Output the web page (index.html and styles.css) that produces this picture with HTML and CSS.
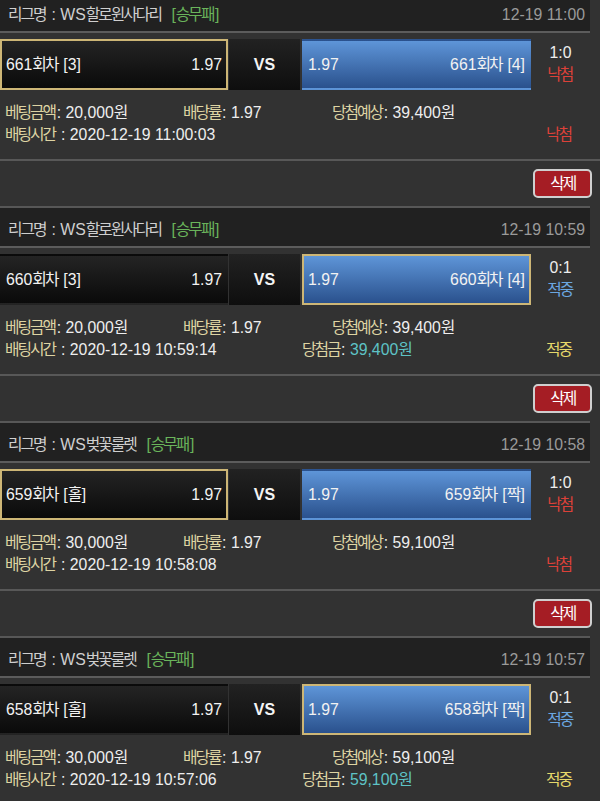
FILE: index.html
```html
<!DOCTYPE html>
<html lang="ko">
<head>
<meta charset="utf-8">
<title>배팅내역</title>
<link rel="stylesheet" href="styles.css">
</head>
<body>
<div class="list">

  <section class="bet">
    <div class="head">
      <span class="league"><span class="k">리그명</span> : WS<span class="k">할로윈사다리</span><span class="type">[<span class="k">승무패</span>]</span></span>
      <span class="date">12-19 11:00</span>
    </div>
    <div class="match">
      <div class="team home pick"><span>661<span class="k">회차</span> [3]</span><span>1.97</span></div>
      <div class="vs">VS</div>
      <div class="team away"><span>1.97</span><span>661<span class="k">회차</span> [4]</span></div>
      <div class="score"><span>1:0</span><span class="lose k">낙첨</span></div>
    </div>
    <div class="info">
      <div class="line">
        <span class="c1"><span class="lbl k">베팅금액</span>: 20,000<span class="k">원</span></span>
        <span class="c2"><span class="lbl k">배당률</span>: 1.97</span>
        <span class="c3"><span class="lbl k">당첨예상</span>: 39,400<span class="k">원</span></span>
      </div>
      <div class="line">
        <span class="c1w"><span class="lbl k">배팅시간</span> : 2020-12-19 11:00:03</span>
        <span class="c4"></span>
        <span class="res lose k">낙첨</span>
      </div>
    </div>
    <div class="actions"><button class="del k" type="button">삭제</button></div>
  </section>

  <section class="bet">
    <div class="head">
      <span class="league"><span class="k">리그명</span> : WS<span class="k">할로윈사다리</span><span class="type">[<span class="k">승무패</span>]</span></span>
      <span class="date">12-19 10:59</span>
    </div>
    <div class="match">
      <div class="team home"><span>660<span class="k">회차</span> [3]</span><span>1.97</span></div>
      <div class="vs">VS</div>
      <div class="team away pick"><span>1.97</span><span>660<span class="k">회차</span> [4]</span></div>
      <div class="score"><span>0:1</span><span class="hit k">적중</span></div>
    </div>
    <div class="info">
      <div class="line">
        <span class="c1"><span class="lbl k">베팅금액</span>: 20,000<span class="k">원</span></span>
        <span class="c2"><span class="lbl k">배당률</span>: 1.97</span>
        <span class="c3"><span class="lbl k">당첨예상</span>: 39,400<span class="k">원</span></span>
      </div>
      <div class="line">
        <span class="c1w"><span class="lbl k">배팅시간</span> : 2020-12-19 10:59:14</span>
        <span class="c4"><span class="lbl k">당첨금</span>: <span class="won">39,400<span class="k">원</span></span></span>
        <span class="res win k">적중</span>
      </div>
    </div>
    <div class="actions"><button class="del k" type="button">삭제</button></div>
  </section>

  <section class="bet">
    <div class="head">
      <span class="league"><span class="k">리그명</span> : WS<span class="k">벚꽃룰렛</span><span class="type">[<span class="k">승무패</span>]</span></span>
      <span class="date">12-19 10:58</span>
    </div>
    <div class="match">
      <div class="team home pick"><span>659<span class="k">회차</span> [<span class="k">홀</span>]</span><span>1.97</span></div>
      <div class="vs">VS</div>
      <div class="team away"><span>1.97</span><span>659<span class="k">회차</span> [<span class="k">짝</span>]</span></div>
      <div class="score"><span>1:0</span><span class="lose k">낙첨</span></div>
    </div>
    <div class="info">
      <div class="line">
        <span class="c1"><span class="lbl k">베팅금액</span>: 30,000<span class="k">원</span></span>
        <span class="c2"><span class="lbl k">배당률</span>: 1.97</span>
        <span class="c3"><span class="lbl k">당첨예상</span>: 59,100<span class="k">원</span></span>
      </div>
      <div class="line">
        <span class="c1w"><span class="lbl k">배팅시간</span> : 2020-12-19 10:58:08</span>
        <span class="c4"></span>
        <span class="res lose k">낙첨</span>
      </div>
    </div>
    <div class="actions"><button class="del k" type="button">삭제</button></div>
  </section>

  <section class="bet">
    <div class="head">
      <span class="league"><span class="k">리그명</span> : WS<span class="k">벚꽃룰렛</span><span class="type">[<span class="k">승무패</span>]</span></span>
      <span class="date">12-19 10:57</span>
    </div>
    <div class="match">
      <div class="team home"><span>658<span class="k">회차</span> [<span class="k">홀</span>]</span><span>1.97</span></div>
      <div class="vs">VS</div>
      <div class="team away pick"><span>1.97</span><span>658<span class="k">회차</span> [<span class="k">짝</span>]</span></div>
      <div class="score"><span>0:1</span><span class="hit k">적중</span></div>
    </div>
    <div class="info">
      <div class="line">
        <span class="c1"><span class="lbl k">베팅금액</span>: 30,000<span class="k">원</span></span>
        <span class="c2"><span class="lbl k">배당률</span>: 1.97</span>
        <span class="c3"><span class="lbl k">당첨예상</span>: 59,100<span class="k">원</span></span>
      </div>
      <div class="line">
        <span class="c1w"><span class="lbl k">배팅시간</span> : 2020-12-19 10:57:06</span>
        <span class="c4"><span class="lbl k">당첨금</span>: <span class="won">59,100<span class="k">원</span></span></span>
        <span class="res win k">적중</span>
      </div>
    </div>
    <div class="actions"><button class="del k" type="button">삭제</button></div>
  </section>

</div>
</body>
</html>
```

FILE: styles.css
```css
* {
  box-sizing: border-box;
  margin: 0;
  padding: 0;
}

body {
  background: #323232;
  font-family: "Liberation Sans", "Noto Sans CJK KR", sans-serif;
  font-size: 15.8px;
  color: #eeeeee;
  overflow: hidden;
}

.list {
  margin-top: -9px;
}

.k {
  letter-spacing: -2px;
  padding-right: 1.5px;
}

.head {
  width: 590px;
  height: 42px;
  background: #212121;
  border-top: 2px solid #575757;
  border-bottom: 2px solid #5c5c5c;
  display: flex;
  justify-content: space-between;
  align-items: center;
  padding: 5px 5px 0 8px;
  line-height: 33px;
  color: #cfcfcf;
}

.type {
  color: #6ab45b;
  margin-left: 9px;
}

.date {
  color: #9a9a9a;
}

.match {
  display: flex;
  height: 57px;
  padding-top: 6px;
}

.team {
  height: 51px;
  display: flex;
  justify-content: space-between;
  align-items: center;
  padding: 0 4px;
  border: 2px solid transparent;
  line-height: 20px;
  color: #f2f2f2;
}

.home {
  width: 228px;
  background: linear-gradient(#242424, #0a0a0a);
}

.vs {
  width: 71px;
  height: 51px;
  margin-left: 1px;
  background: linear-gradient(#222222, #0e0e0e);
  display: flex;
  align-items: center;
  justify-content: center;
  font-weight: bold;
  font-size: 16px;
  color: #f4f4f4;
}

.away {
  width: 229px;
  margin-left: 2px;
  background: linear-gradient(#5e95d8, #2a518d);
}

.pick {
  border-color: #cdb676;
}

.score {
  width: 59px;
  height: 51px;
  display: flex;
  flex-direction: column;
  align-items: center;
  justify-content: center;
  line-height: 22px;
  padding-bottom: 2px;
}

.lose {
  color: #dc4139;
}

.hit {
  color: #6ba6e0;
}

.info {
  height: 69px;
  padding: 12px 0 0 5px;
}

.line {
  display: flex;
  height: 22px;
  line-height: 22px;
  white-space: nowrap;
}

.c1 {
  width: 178px;
}

.c2 {
  width: 149px;
}

.c1w {
  width: 297px;
}

.c4 {
  width: 244px;
}

.lbl {
  color: #ded4a3;
}

.won {
  color: #5ec3c6;
}

.win {
  color: #e5d86a;
}

.actions {
  height: 47px;
  border-top: 2px solid #585858;
  display: flex;
  justify-content: flex-end;
  align-items: flex-start;
  padding: 8px 8px 0 0;
}

.del {
  width: 59px;
  height: 29px;
  background: #a51d24;
  border: 2px solid #cfcfcf;
  border-radius: 5px;
  color: #ffffff;
  font-family: inherit;
  font-size: 15.8px;
  line-height: 23px;
  padding-left: 2px;
}
```
